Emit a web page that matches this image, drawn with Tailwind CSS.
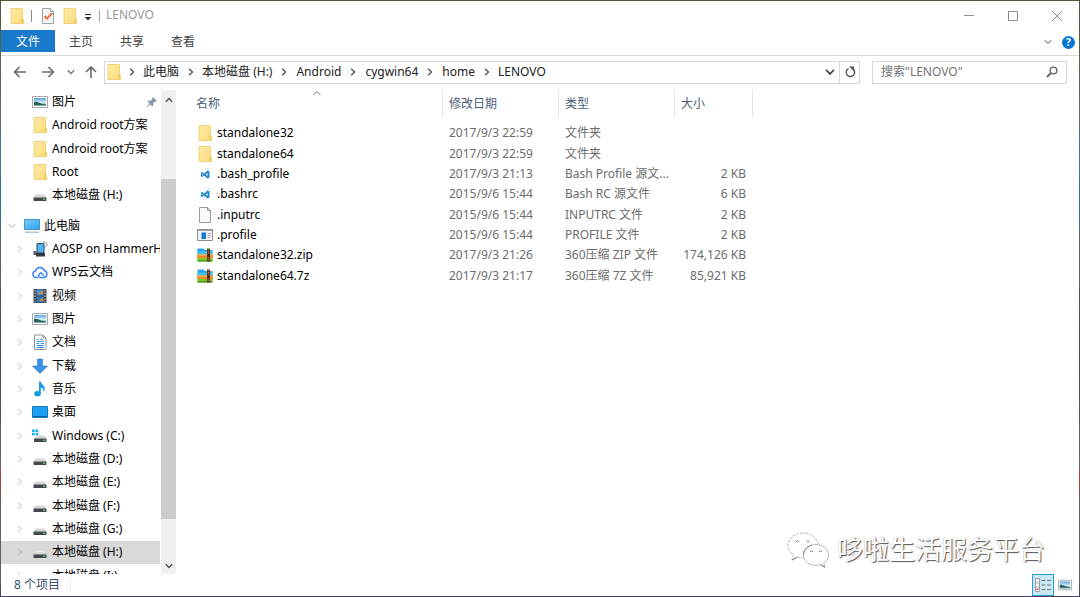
<!DOCTYPE html>
<html lang="zh-CN">
<head>
<meta charset="utf-8">
<title>LENOVO</title>
<script src="https://cdn.jsdelivr.net/npm/@tailwindcss/browser@4"></script>
</head>
<body class="h-screen overflow-hidden bg-[linear-gradient(180deg,#4f5a3c_0%,#6b6a62_20%,#3d78a0_24%,#2f6f9c_36%,#6b6459_42%,#4c4a48_60%,#6d6660_78%,#c22f36_80%,#66605a_84%,#6b5f66_97%,#4a3f66_100%)] p-px font-['Noto_Sans','Noto_Sans_CJK_SC',sans-serif] text-xs text-black">
<svg class="absolute size-0" aria-hidden="true">
  <defs>
    <linearGradient id="gf" x1="0" y1="0" x2="1" y2="1"><stop offset="0" stop-color="#ffeaa5"/><stop offset="1" stop-color="#fbdc7c"/></linearGradient>
    <linearGradient id="gs" x1="0" y1="0" x2="1" y2="1"><stop offset="0" stop-color="#79ccfb"/><stop offset="1" stop-color="#2ea3f2"/></linearGradient>
    <linearGradient id="gd" x1="0" y1="0" x2="0" y2="1"><stop offset="0" stop-color="#eceded"/><stop offset="1" stop-color="#c3c5c6"/></linearGradient>
    <linearGradient id="gp" x1="0" y1="0" x2="0" y2="1"><stop offset="0" stop-color="#5d9fe0"/><stop offset=".55" stop-color="#d8ecf5"/><stop offset="1" stop-color="#6d9ca0"/></linearGradient>
    <symbol id="folder" viewBox="0 0 16 16"><path d="M2 .5h11.500v10.500l1 .6v3.900H2z" fill="url(#gf)" stroke="#efcd6a" stroke-width=".8"/><path d="M12 10.500h2.500v5H12z" fill="#f3cf62"/></symbol>
    <symbol id="drive" viewBox="0 0 16 16"><path d="M3.500 7h9l2 3.500h-13z" fill="url(#gd)"/><path d="M1.500 10.500h13V14h-13z" fill="#46494b"/><path d="M11 11.700h2.200v1.200H11z" fill="#4be04b"/></symbol>
    <symbol id="pic" viewBox="0 0 16 16"><path d="M.5 2.500h15v11H.5z" fill="#fff" stroke="#a4a8ab"/><path d="M2 4h12v8H2z" fill="url(#gp)"/><path d="M2 8c3-1 5 1 7 1.500s3 .8 5 .8V11H2z" fill="#2d6155"/></symbol>
    <symbol id="chev" viewBox="0 0 8 8"><path d="M2.200.8 5.500 4 2.200 7.200" fill="none" stroke="currentColor" stroke-width="1.400"/></symbol>
    <symbol id="down" viewBox="0 0 8 8"><path d="M.8 2.200 4 5.500 7.200 2.200" fill="none" stroke="currentColor" stroke-width="1.400"/></symbol>
    <symbol id="code" viewBox="0 0 16 16"><path d="M3 .5h8l3 3v12H3z" fill="#fdfdfd"/><path d="M10.500 1l3 3h-3z" fill="#e3e5e7"/><path d="M10.500 4.500 12.500 5.500v6l-2 1-3.300-3-2 1.600-1.200-.6v-4l1.200-.6 2 1.600zM10.500 7 8.700 8.500l1.800 1.500zM5 7.600v1.800l1-.9z" fill="#2487ce" fill-rule="evenodd"/></symbol>
    <symbol id="zip" viewBox="0 0 16 16"><path d="M.5 1.500h6l1.500 1.500h7.500v5H.5z" fill="#2aa3e8"/><path d="M.5 4.500h15v3H.5z" fill="#45c0f5"/><path d="M0 7.500h16V11H0z" fill="#f28a1f"/><path d="M.5 7.500h15v1H.5z" fill="#fbc567"/><path d="M.5 11h15v3.500H.5z" fill="#7cc52a"/><path d="M.5 13h15v1.500H.5z" fill="#4c9a22"/><path d="M10 1.500h3v13h-3z" fill="#6b3a1c"/><path d="M11.500 2v12" stroke="#a8703f" stroke-width="1" stroke-dasharray="1 1"/><path d="M10.500 7h2v3h-2z" fill="#3a2214"/></symbol>
  </defs>
</svg>
<div class="flex h-full flex-col bg-white">
  <header class="flex h-[29px] shrink-0 items-center">
    <svg class="ml-2 size-4"><use href="#folder"/></svg>
    <span class="ml-1.5 h-3 w-px bg-[#8a8a8a]"></span>
    <button aria-label="属性" class="ml-2 flex"><svg class="size-4" viewBox="0 0 16 16"><path d="M2.500.5h8l3 3v12h-11z" fill="#f5f6f7" stroke="#9fa3a6"/><path d="M10.500.5v3h3" fill="#fff" stroke="#9fa3a6"/><path d="m4.500 8 2.500 2.800L12 5" fill="none" stroke="#f0703f" stroke-width="2"/></svg></button>
    <button aria-label="新建文件夹" class="ml-1.5 flex"><svg class="size-4"><use href="#folder"/></svg></button>
    <button aria-label="自定义快速访问工具栏" class="ml-1.5 flex"><svg class="h-4 w-2" viewBox="0 0 8 16"><path d="M1 6.500h6" stroke="#333" stroke-width="1.200"/><path d="M.5 9h7L4 12.500z" fill="#333"/></svg></button>
    <span class="ml-[7px] h-3 w-px bg-[#a5a5a5]"></span>
    <h1 class="ml-1.5 pb-px text-[#999]">LENOVO</h1>
    <div class="ml-auto flex items-center gap-[34px] pr-[17px] text-[#8f8f8f]">
      <button aria-label="最小化"><svg class="size-2.5" viewBox="0 0 10 10"><path d="M0 4.500h10" stroke="currentColor"/></svg></button>
      <button aria-label="最大化"><svg class="size-2.5" viewBox="0 0 10 10"><path d="M.5.5h9v9h-9z" fill="none" stroke="currentColor"/></svg></button>
      <button aria-label="关闭"><svg class="size-2.5" viewBox="0 0 10 10"><path d="m0 0 10 10M10 0 0 10" stroke="currentColor"/></svg></button>
    </div>
  </header>
  <nav class="flex h-[26px] shrink-0 items-start border-b border-[#dcdcdc] text-[#444]">
    <button class="h-[22px] w-[54px] bg-[#1979ca] pt-0.5 text-white">文件</button>
    <button class="ml-[14px] h-[22px] pt-0.5">主页</button>
    <button class="ml-[27px] h-[22px] pt-0.5">共享</button>
    <button class="ml-[27px] h-[22px] pt-0.5">查看</button>
    <div class="ml-auto flex h-6 items-center gap-2.5 pr-1 text-[#a0a0a0]">
      <button aria-label="展开功能区"><svg class="size-2"><use href="#down"/></svg></button>
      <button aria-label="帮助" class="size-[13px] rounded-full bg-[#0a78d7] text-center text-[10px] leading-[13px] font-bold text-white">?</button>
    </div>
  </nav>
  <div class="flex h-8 shrink-0 items-center pr-3">
    <button aria-label="后退" class="ml-3 text-[#6a6a6a]"><svg class="size-3.5" viewBox="0 0 14 14"><path d="M13 7H2M6.500 2 1.500 7l5 5" fill="none" stroke="currentColor" stroke-width="1.600"/></svg></button>
    <button aria-label="前进" class="ml-3.5 text-[#6a6a6a]"><svg class="size-3.5" viewBox="0 0 14 14"><path d="M1 7h11M7.500 2l5 5-5 5" fill="none" stroke="currentColor" stroke-width="1.600"/></svg></button>
    <button aria-label="最近浏览的位置" class="ml-3 text-[#777]"><svg class="size-2"><use href="#down"/></svg></button>
    <button aria-label="上移" class="ml-[9px] text-[#6a6a6a]"><svg class="size-3.5" viewBox="0 0 14 14"><path d="M7 13V2M2 7l5-5 5 5" fill="none" stroke="currentColor" stroke-width="1.600"/></svg></button>
    <div class="ml-1.5 flex h-[23px] flex-1 items-center border border-[#d9d9d9] text-[#222]">
      <svg class="ml-px size-4"><use href="#folder"/></svg>
      <svg class="mx-1.5 size-2 text-[#555]"><use href="#chev"/></svg>
      <a href="#" class="ml-px">此电脑</a>
      <svg class="mr-[7px] ml-2 size-2 text-[#555]"><use href="#chev"/></svg>
      <a href="#">本地磁盘 (H:)</a>
      <svg class="mx-2 size-2 text-[#555]"><use href="#chev"/></svg>
      <a href="#">Android</a>
      <svg class="mx-2 size-2 text-[#555]"><use href="#chev"/></svg>
      <a href="#">cygwin64</a>
      <svg class="mx-2 size-2 text-[#555]"><use href="#chev"/></svg>
      <a href="#">home</a>
      <svg class="mr-[7px] ml-2 size-2 text-[#555]"><use href="#chev"/></svg>
      <a href="#">LENOVO</a>
      <button aria-label="以前的位置" class="ml-auto flex h-full w-[18px] items-center justify-center text-[#444]"><svg class="size-2.5"><use href="#down"/></svg></button>
      <button aria-label="刷新" class="flex h-full w-5 items-center justify-center border-l border-[#d9d9d9]"><svg class="size-3" viewBox="0 0 12 12"><path d="M9.500 3.500A4.200 4.200 0 1 1 4.500 2.600" fill="none" stroke="#555" stroke-width="1.400"/><path d="M5 .5h5v5z" fill="#555"/></svg></button>
    </div>
    <div class="ml-3 flex h-[23px] w-[195px] items-center border border-[#d9d9d9] px-2">
      <input type="text" aria-label="搜索" placeholder='搜索"LENOVO"' class="min-w-0 flex-1 outline-none placeholder:text-[#737373]">
      <svg class="size-3" viewBox="0 0 12 12"><circle cx="7.500" cy="4.500" r="3.400" fill="none" stroke="#666" stroke-width="1.400"/><path d="M5 7 1 11" stroke="#666" stroke-width="2"/></svg>
    </div>
  </div>
  <div class="flex min-h-0 flex-1 pt-0.5">
    <aside class="flex w-[159px] shrink-0 flex-col overflow-hidden whitespace-nowrap [&_svg]:shrink-0">
      <ul class="flex h-[117px] shrink-0 flex-col">
        <li class="flex flex-1 items-center gap-1 pl-[31px]"><svg class="size-4"><use href="#pic"/></svg>图片<svg class="mr-0.5 ml-auto size-3" viewBox="0 0 12 12"><path d="m7 1 4 4-1 .8-1-.3-2 2 .2 2-1 1L4 8.300 1.300 11l-.7-.6L3.400 7.600 1.500 5.500l1-.9 2 .2 2-2L6.200 2z" fill="#8b98a5"/></svg></li>
        <li class="flex flex-1 items-center gap-1 pl-[31px]"><svg class="size-4"><use href="#folder"/></svg>Android root方案</li>
        <li class="flex flex-1 items-center gap-1 pl-[31px]"><svg class="size-4"><use href="#folder"/></svg>Android root方案</li>
        <li class="flex flex-1 items-center gap-1 pl-[31px]"><svg class="size-4"><use href="#folder"/></svg>Root</li>
        <li class="flex flex-1 items-center gap-1 pl-[31px]"><svg class="size-4"><use href="#drive"/></svg>本地磁盘 (H:)</li>
      </ul>
      <ul class="mt-[7px] flex h-[350px] shrink-0 flex-col">
        <li class="flex flex-1 items-center gap-1 pl-[7px]"><svg class="size-2 text-[#d2d2d2]"><use href="#down"/></svg><svg class="ml-1 size-4" viewBox="0 0 16 16"><path d="M.5 1.500h15v10H.5z" fill="url(#gs)" stroke="#2b7fb8" stroke-width=".8"/><path d="M2 13.500h12l1.500 1.500H.5z" fill="#a9c3d4"/></svg>此电脑</li>
        <li class="flex flex-1 items-center gap-1 pl-[15px]"><svg class="mr-1 size-2 text-[#dcdcdc]"><use href="#chev"/></svg><svg class="size-4" viewBox="0 0 16 16"><path d="M5 2.500h7v9.500H5z" fill="#4db5f4" stroke="#3a4650"/><path d="M10.500 2.500c0-2 4.500-2.500 4.500 1 0 3-3 2-3 4" fill="none" stroke="#8b9297"/><path d="M1.500 10h3v4h-3z" fill="#55606a"/><path d="M4 12h9v3.500H4z" fill="#343a40"/></svg><span class="min-w-0 flex-1 overflow-hidden">AOSP on HammerHead</span></li>
        <li class="flex flex-1 items-center gap-1 pl-[15px]"><svg class="mr-1 size-2 text-[#dcdcdc]"><use href="#chev"/></svg><svg class="size-4" viewBox="0 0 16 16"><path d="M6 13.500H4A3.300 3.300 0 0 1 3.500 7 4.600 4.600 0 0 1 12.300 6.500 3.600 3.600 0 0 1 12 13.500H8.500C6.500 13.500 6 11.500 7.300 10.300L9 8.800l3 3" fill="none" stroke="#3f83f8" stroke-width="1.500"/></svg>WPS云文档</li>
        <li class="flex flex-1 items-center gap-1 pl-[15px]"><svg class="mr-1 size-2 text-[#dcdcdc]"><use href="#chev"/></svg><svg class="size-4" viewBox="0 0 16 16"><path d="M1.500 1h13v14h-13z" fill="#3d4146"/><path d="M4.500 1.500h7v6h-7z" fill="#4a8fd6"/><path d="M4.500 8.500h7v6h-7z" fill="#3776ba"/><path d="m6 6 3-3 2 1v2zM7 13l3-3 1.500 1v2z" fill="#e08a3c"/><path d="M3 2v13M13 2v13" stroke="#b9bec2" stroke-width="1.200" stroke-dasharray="1.400 1.400"/></svg>视频</li>
        <li class="flex flex-1 items-center gap-1 pl-[15px]"><svg class="mr-1 size-2 text-[#dcdcdc]"><use href="#chev"/></svg><svg class="size-4"><use href="#pic"/></svg>图片</li>
        <li class="flex flex-1 items-center gap-1 pl-[15px]"><svg class="mr-1 size-2 text-[#dcdcdc]"><use href="#chev"/></svg><svg class="size-4" viewBox="0 0 16 16"><path d="M2.500 1h8.500l3 3v11.500H2.500z" fill="#fff" stroke="#8d959b"/><path d="M11 1v3h3" fill="none" stroke="#8d959b"/><path d="M4.500 5.500h2M8 5.500h3M4.500 7.500h7.500M4.500 9.500h3M8.500 9.500H12M4.500 11.500H12M4.500 13.500H12" stroke="#3b9bdc"/></svg>文档</li>
        <li class="flex flex-1 items-center gap-1 pl-[15px]"><svg class="mr-1 size-2 text-[#dcdcdc]"><use href="#chev"/></svg><svg class="size-4" viewBox="0 0 16 16"><path d="M5.500 1h5v7h5L8 15.500.5 8h5z" fill="#3c93e4" stroke="#2a78c4" stroke-width=".6"/></svg>下载</li>
        <li class="flex flex-1 items-center gap-1 pl-[15px]"><svg class="mr-1 size-2 text-[#dcdcdc]"><use href="#chev"/></svg><svg class="size-4" viewBox="0 0 16 16"><ellipse cx="5.500" cy="12.700" rx="3.300" ry="2.600" fill="#159ae8"/><path d="M7 .5h1.800c.4 3 4 4 4 7 0 1.500-.6 2.500-1.500 3.500.5-2.500-.3-4-2.500-4.500v6.500H7z" fill="#159ae8"/></svg>音乐</li>
        <li class="flex flex-1 items-center gap-1 pl-[15px]"><svg class="mr-1 size-2 text-[#dcdcdc]"><use href="#chev"/></svg><svg class="size-4" viewBox="0 0 16 16"><path d="M.5 2.500h15v11H.5z" fill="#1ea0f5" stroke="#1579bd"/><path d="M1 12.500h14" stroke="#0c63a3"/></svg>桌面</li>
        <li class="flex flex-1 items-center gap-1 pl-[15px]"><svg class="mr-1 size-2 text-[#dcdcdc]"><use href="#chev"/></svg><svg class="size-4" viewBox="0 0 16 16"><path d="M4.500 7h8l2 3.500h-12z" fill="url(#gd)"/><path d="M2 10.500h12.500V14H2z" fill="#46494b"/><path d="M11 11.700h2.200v1.200H11z" fill="#4be04b"/><path d="M0 1.500h2.700v2.500H0zM3.500 1.500h2.700v2.500H3.500zM0 4.800h2.700v2.500H0zM3.500 4.800h2.700v2.500H3.500z" fill="#14b0ee"/></svg>Windows (C:)</li>
        <li class="flex flex-1 items-center gap-1 pl-[15px]"><svg class="mr-1 size-2 text-[#dcdcdc]"><use href="#chev"/></svg><svg class="size-4"><use href="#drive"/></svg>本地磁盘 (D:)</li>
        <li class="flex flex-1 items-center gap-1 pl-[15px]"><svg class="mr-1 size-2 text-[#dcdcdc]"><use href="#chev"/></svg><svg class="size-4"><use href="#drive"/></svg>本地磁盘 (E:)</li>
        <li class="flex flex-1 items-center gap-1 pl-[15px]"><svg class="mr-1 size-2 text-[#dcdcdc]"><use href="#chev"/></svg><svg class="size-4"><use href="#drive"/></svg>本地磁盘 (F:)</li>
        <li class="flex flex-1 items-center gap-1 pl-[15px]"><svg class="mr-1 size-2 text-[#dcdcdc]"><use href="#chev"/></svg><svg class="size-4"><use href="#drive"/></svg>本地磁盘 (G:)</li>
        <li class="flex flex-1 items-center gap-1 bg-[#d9d9d9] pl-[15px]"><svg class="mr-1 size-2 text-[#c0c0c0]"><use href="#chev"/></svg><svg class="size-4"><use href="#drive"/></svg>本地磁盘 (H:)</li>
      </ul>
      <div class="flex h-[23px] shrink-0 items-center gap-1 pl-[15px]"><svg class="mr-1 size-2 text-[#dcdcdc]"><use href="#chev"/></svg><svg class="size-4"><use href="#drive"/></svg>本地磁盘 (I:)</div>
    </aside>
    <div class="ml-px flex w-[15px] shrink-0 flex-col items-center bg-[#f0f0f0] text-[#505050]">
      <svg class="mt-1.5 size-2 rotate-180"><use href="#down"/></svg>
      <div class="mt-[75px] h-[340px] w-full bg-[#cdcdcd]"></div>
      <svg class="mt-auto mb-1 size-2"><use href="#down"/></svg>
    </div>
    <main class="relative ml-3 flex-1">
      <svg class="absolute top-0 left-[125px] size-2 text-[#777]" viewBox="0 0 8 8"><path d="M.5 5 4 1.500 7.500 5" fill="none" stroke="currentColor"/></svg>
      <table class="w-[565px] table-fixed border-collapse whitespace-nowrap">
        <colgroup><col class="w-[255px]"><col class="w-[116px]"><col class="w-[116px]"><col class="w-[78px]"></colgroup>
        <thead class="text-left text-[#4c607a]">
          <tr>
            <th scope="col" class="p-0 pb-1.5 font-normal"><div class="flex h-[27px] items-center border-r border-[#e5e5e5] pl-2">名称</div></th>
            <th scope="col" class="p-0 pb-1.5 font-normal"><div class="flex h-[27px] items-center border-r border-[#e5e5e5] pl-1.5">修改日期</div></th>
            <th scope="col" class="p-0 pb-1.5 font-normal"><div class="flex h-[27px] items-center border-r border-[#e5e5e5] pl-1.5">类型</div></th>
            <th scope="col" class="p-0 pb-1.5 font-normal"><div class="flex h-[27px] items-center border-r border-[#e5e5e5] pl-1.5">大小</div></th>
          </tr>
        </thead>
        <tbody class="h-[163px] text-[#6d6d6d]">
          <tr><td class="p-0 pl-[9px] text-black"><div class="flex items-center gap-1"><svg class="size-4"><use href="#folder"/></svg>standalone32</div></td><td class="p-0 pl-1.5">2017/9/3 22:59</td><td class="p-0 pl-1.5">文件夹</td><td></td></tr>
          <tr><td class="p-0 pl-[9px] text-black"><div class="flex items-center gap-1"><svg class="size-4"><use href="#folder"/></svg>standalone64</div></td><td class="p-0 pl-1.5">2017/9/3 22:59</td><td class="p-0 pl-1.5">文件夹</td><td></td></tr>
          <tr><td class="p-0 pl-[9px] text-black"><div class="flex items-center gap-1"><svg class="size-4"><use href="#code"/></svg>.bash_profile</div></td><td class="p-0 pl-1.5">2017/9/3 21:13</td><td class="p-0 pl-1.5">Bash Profile 源文...</td><td class="p-0 pr-[7px] text-right">2 KB</td></tr>
          <tr><td class="p-0 pl-[9px] text-black"><div class="flex items-center gap-1"><svg class="size-4"><use href="#code"/></svg>.bashrc</div></td><td class="p-0 pl-1.5">2015/9/6 15:44</td><td class="p-0 pl-1.5">Bash RC 源文件</td><td class="p-0 pr-[7px] text-right">6 KB</td></tr>
          <tr><td class="p-0 pl-[9px] text-black"><div class="flex items-center gap-1"><svg class="size-4" viewBox="0 0 16 16"><path d="M2.500.5h8l3 3v12h-11z" fill="#fafafa" stroke="#9a9a9a"/><path d="M10.500.5v3h3" fill="none" stroke="#9a9a9a"/></svg>.inputrc</div></td><td class="p-0 pl-1.5">2015/9/6 15:44</td><td class="p-0 pl-1.5">INPUTRC 文件</td><td class="p-0 pr-[7px] text-right">2 KB</td></tr>
          <tr><td class="p-0 pl-[9px] text-black"><div class="flex items-center gap-1"><svg class="size-4" viewBox="0 0 16 16"><path d="M.5 2.500h15v11H.5z" fill="#f4f4f4" stroke="#8c9093"/><path d="M0 3h16" stroke="#8c9093" stroke-width="1.500"/><path d="M4.500 5.500H9V12H4.500z" fill="#0d78d6"/><path d="M10.500 6.500h3.500M10.500 8.500h3.500M10.500 10.500h2.500" stroke="#aaa"/></svg>.profile</div></td><td class="p-0 pl-1.5">2015/9/6 15:44</td><td class="p-0 pl-1.5">PROFILE 文件</td><td class="p-0 pr-[7px] text-right">2 KB</td></tr>
          <tr><td class="p-0 pl-[9px] text-black"><div class="flex items-center gap-1"><svg class="size-4"><use href="#zip"/></svg>standalone32.zip</div></td><td class="p-0 pl-1.5">2017/9/3 21:26</td><td class="p-0 pl-1.5">360压缩 ZIP 文件</td><td class="p-0 pr-[7px] text-right">174,126 KB</td></tr>
          <tr><td class="p-0 pl-[9px] text-black"><div class="flex items-center gap-1"><svg class="size-4"><use href="#zip"/></svg>standalone64.7z</div></td><td class="p-0 pl-1.5">2017/9/3 21:17</td><td class="p-0 pl-1.5">360压缩 7Z 文件</td><td class="p-0 pr-[7px] text-right">85,921 KB</td></tr>
        </tbody>
      </table>
    </main>
  </div>
  <footer class="flex h-[22px] shrink-0 items-center pr-[7px] pl-[13px] text-[#3b4f6b]">
    <span>8 个项目</span><span class="ml-2.5 h-3 w-px bg-[#eee]"></span>
    <button aria-label="详细信息" class="ml-auto flex h-[22px] w-[22px] items-center justify-center border border-[#26a0da] bg-[#cbe8f6]"><svg class="h-3.5 w-4" viewBox="0 0 16 14"><path d="M.5.5h4v13h-4zM.5 5h4M.5 9h4" fill="#fff" stroke="#a0a0a0"/><path d="M1.500 10.500h2v1.500h-2z" fill="#e0453a"/><path d="M6.500 2.500h4M12 2.500h4M6.500 7h4M12 7h4M6.500 11.500h4M12 11.500h4" stroke="#777"/></svg></button>
    <button aria-label="大缩略图" class="ml-1 flex"><svg class="size-3.5"><use href="#pic"/></svg></button>
  </footer>
</div>
<div class="pointer-events-none absolute right-[35px] bottom-7 flex items-center gap-2">
  <svg class="h-10 w-[42px]" viewBox="0 0 42 40" fill="#fff" stroke="#b4b4b4" stroke-width=".9"><path d="M16 4C7 4 1 9.500 1 16.500c0 4 2 7.300 5.300 9.500L5 31l5.500-3c2 .6 4 .9 6 .9C24 28.500 31 23 31 16.500 31 9.500 25 4 16 4z" stroke-dasharray="3 1"/><path d="M29 15.500c-7 0-12.500 4.700-12.500 10.500S22 36.500 29 36.500c1.600 0 3-.3 4.500-.8l4.500 2.500-1.200-4.200c3-2 4.700-4.500 4.700-8 0-5.800-5.500-10.500-12.500-10.500z"/><path d="M5 31l5.500-3M16.500 26c0-4 2.500-8 8-10M33.500 35.700l4.500 2.500M9 13q1.500-2.500 3 0M19.500 13q1.500-2.500 3 0M23 23q1.500-2.500 3 0M32 23q1.500-2.500 3 0" fill="none" stroke="#6f6f6f"/></svg>
  <span class="text-[26px] leading-10 text-white [text-shadow:1px_1px_1px_#555,0_0_1px_#aaa]">哆啦生活服务平台</span>
</div>
</body>
</html>
